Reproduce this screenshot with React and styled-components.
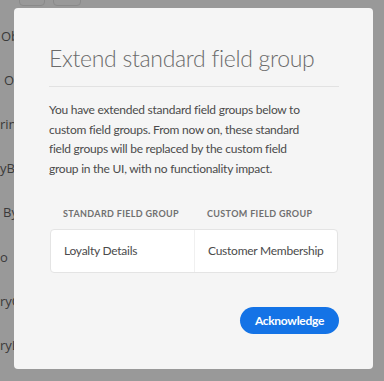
import * as React from "react"
import styled, { createGlobalStyle } from "styled-components"

const GlobalStyle = createGlobalStyle`
  html, body {
    margin: 0;
    padding: 0;
    background: #999999;
    overflow: hidden;
  }
  * {
    box-sizing: border-box;
  }
`

// Page behind the dialog (dimmed)
const Page = styled.div`
  width: 384px;
  height: 381px;
  position: relative;
  display: flex;
  flex-direction: column;
  background: #999999;
  font-family: "Open Sans", sans-serif;
  overflow: hidden;
`

const TopButtons = styled.div`
  display: flex;
  gap: 8px;
  padding-left: 19px;
  margin-top: -7px;
`

const TopButton = styled.div`
  width: ${props => props.w}px;
  height: 13px;
  border: 1px solid #8a8a8a;
  border-radius: 4px;
`

const SideList = styled.div`
  display: flex;
  flex-direction: column;
  padding-top: 8px;
`

const SideRow = styled.div`
  height: 44.1px;
  display: flex;
  align-items: center;
  padding-left: ${props => props.indent}px;
  font-size: 13px;
  color: #3a3a3a;
  white-space: nowrap;
`

const Bar = styled.span`
  display: inline-block;
  width: 1px;
  height: 16px;
  background: #7d7d7d;
  margin-left: 7px;
`

// Dialog
const Dialog = styled.div`
  position: absolute;
  top: 8px;
  left: 14px;
  width: 359px;
  background: #f5f5f5;
  border-radius: 4px;
  padding: 34px 34px 35px 35px;
  font-family: Lato, "Open Sans", sans-serif;
`

const Title = styled.h2`
  margin: 0;
  font-size: 23px;
  line-height: 32px;
  font-weight: 300;
  letter-spacing: -0.3px;
  color: #6b6b6b;
  white-space: nowrap;
`

const Divider = styled.div`
  height: 1px;
  background: #e2e2e2;
  margin: 12px 0 13px;
`

const Body = styled.p`
  margin: 0;
  font-size: 12px;
  line-height: 19.5px;
  letter-spacing: -0.25px;
  color: #4b4b4b;
  padding-right: 30px;
`

const Table = styled.div`
  margin-top: 29px;
  margin-left: 1px;
  margin-right: 1px;
`

const HeadRow = styled.div`
  display: grid;
  grid-template-columns: minmax(0, 1fr) minmax(0, 1fr);
  margin-bottom: 8px;
`

const HeadCell = styled.div`
  padding-left: 13px;
  font-size: 9px;
  line-height: 14px;
  font-weight: 700;
  letter-spacing: 0.35px;
  text-transform: uppercase;
  color: #707070;
  white-space: nowrap;
`

const BodyRow = styled.div`
  display: grid;
  grid-template-columns: minmax(0, 1fr) minmax(0, 1fr);
  background: #ffffff;
  border: 1px solid #e4e4e4;
  border-radius: 4px;
`

const Cell = styled.div`
  padding: 11px 13px;
  font-size: 12px;
  line-height: 19.5px;
  letter-spacing: -0.25px;
  color: #4b4b4b;
  white-space: nowrap;
  border-left: ${props => props.first ? "none" : "1px solid #f0f0f0"};
`

const Footer = styled.div`
  display: flex;
  justify-content: flex-end;
  margin-top: 34px;
`

const PrimaryButton = styled.button`
  height: 27px;
  padding: 0 15px;
  border: none;
  border-radius: 14px;
  background: #1473e6;
  color: #ffffff;
  font-family: Lato, "Open Sans", sans-serif;
  font-size: 12px;
  font-weight: 700;
  letter-spacing: -0.3px;
  cursor: pointer;
`

// Data
const sideItems = [
  { text: "Ob", indent: 1 },
  { text: "O", indent: 4 },
  { text: "rin", indent: 0 },
  { text: "yB", indent: 0 },
  { text: "By", indent: 3 },
  { text: "o", indent: 0, bar: true },
  { text: "ryC", indent: 0 },
  { text: "ryL", indent: 0 },
]

const App = () => {
  return (
    <Page>
      <GlobalStyle />
      <TopButtons>
        <TopButton w={26} />
        <TopButton w={28} />
      </TopButtons>
      <SideList>
        {sideItems.map((item, index) => (
          <SideRow key={index} indent={item.indent}>
            {item.text}
            {item.bar && <Bar />}
          </SideRow>
        ))}
      </SideList>

      <Dialog>
        <Title>Extend standard field group</Title>
        <Divider />
        <Body>
          You have extended standard field groups below to custom field
          groups. From now on, these standard field groups will be replaced
          by the custom field group in the UI, with no functionality impact.
        </Body>
        <Table>
          <HeadRow>
            <HeadCell>Standard field group</HeadCell>
            <HeadCell>Custom field group</HeadCell>
          </HeadRow>
          <BodyRow>
            <Cell first>Loyalty Details</Cell>
            <Cell>Customer Membership</Cell>
          </BodyRow>
        </Table>
        <Footer>
          <PrimaryButton>Acknowledge</PrimaryButton>
        </Footer>
      </Dialog>
    </Page>
  )
}

export default App
